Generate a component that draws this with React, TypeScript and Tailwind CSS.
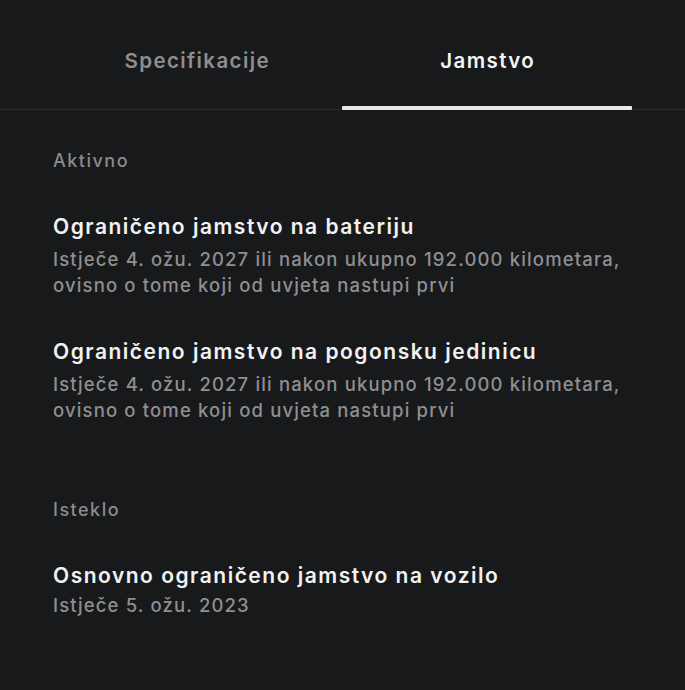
import { useState } from 'react';

type Warranty = {
  title: string;
  detail: string;
};

const active: Warranty[] = [
  {
    title: 'Ograničeno jamstvo na bateriju',
    detail: 'Istječe 4. ožu. 2027 ili nakon ukupno 192.000 kilometara, ovisno o tome koji od uvjeta nastupi prvi',
  },
  {
    title: 'Ograničeno jamstvo na pogonsku jedinicu',
    detail: 'Istječe 4. ožu. 2027 ili nakon ukupno 192.000 kilometara, ovisno o tome koji od uvjeta nastupi prvi',
  },
];

const expired: Warranty[] = [
  { title: 'Osnovno ograničeno jamstvo na vozilo', detail: 'Istječe 5. ožu. 2023' },
];

function Item({ item, tight }: { item: Warranty; tight?: boolean }) {
  return (
    <div className="mt-[40px]">
      <p className="text-[21px] leading-[28px] font-semibold tracking-[1.5px] text-[#f2f2f2]">{item.title}</p>
      <p
        className={`${tight ? 'mt-[2px]' : 'mt-[5px]'} text-[18.5px] leading-[26px] font-medium tracking-[1.15px] text-[#8f8f91]`}
      >
        {item.detail}
      </p>
    </div>
  );
}

export default function App() {
  const [tab, setTab] = useState<'spec' | 'warranty'>('warranty');

  return (
    <div
      className="min-h-[690px] w-full bg-[#18191b] text-white"
      style={{ fontFamily: 'Inter, "Noto Sans", sans-serif' }}
    >
      {/* Tabs */}
      <div className="h-[110px] border-b border-[#2b2c2f] px-[52px] flex">
        {[
          { id: 'spec' as const, label: 'Specifikacije' },
          { id: 'warranty' as const, label: 'Jamstvo' },
        ].map((t) => (
          <button
            key={t.id}
            onClick={() => setTab(t.id)}
            className={`relative flex-1 pt-[47px] flex flex-col items-center text-[20.5px] leading-[28px] font-semibold tracking-[1.4px] ${
              tab === t.id ? 'text-[#f4f4f4]' : 'text-[#8e8e90]'
            }`}
          >
            {t.label}
            {tab === t.id && (
              <span className="absolute -left-px right-px -bottom-px h-[4px] rounded-[1px] bg-[#e8e8e8]" />
            )}
          </button>
        ))}
      </div>

      {/* Content */}
      <div className="px-[53px] pb-10">
        <p className="pt-[39px] text-[18px] leading-[24px] font-medium tracking-[1.5px] text-[#8b8b8d]">Aktivno</p>
        {active.map((w) => (
          <Item key={w.title} item={w} />
        ))}

        <p className="mt-[75px] text-[18px] leading-[24px] font-medium tracking-[1.5px] text-[#8b8b8d]">Isteklo</p>
        {expired.map((w) => (
          <Item key={w.title} item={w} tight />
        ))}
      </div>
    </div>
  );
}
